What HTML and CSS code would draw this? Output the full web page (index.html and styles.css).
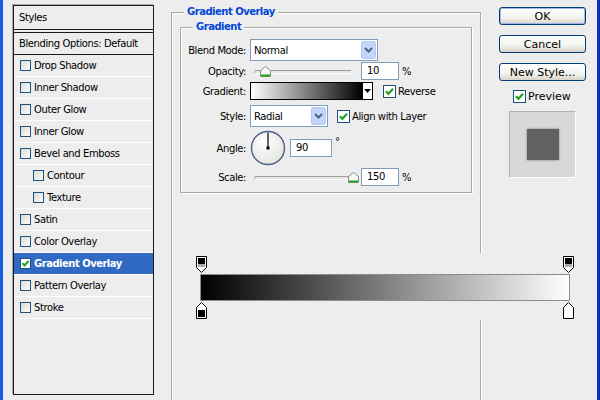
FILE: index.html
```html
<!DOCTYPE html>
<html lang="en">
<head>
    <meta charset="UTF-8">
    <title>Layer Style</title>
    <link rel="stylesheet" href="styles.css">
</head>
<body>
    <div class="window">
        <div class="styles-list">
            <div class="list-head">Styles</div>
            <div class="list-blend">Blending Options: Default</div>
            <div class="list-item"><span class="cb"></span>Drop Shadow</div>
            <div class="list-item"><span class="cb"></span>Inner Shadow</div>
            <div class="list-item"><span class="cb"></span>Outer Glow</div>
            <div class="list-item"><span class="cb"></span>Inner Glow</div>
            <div class="list-item"><span class="cb"></span>Bevel and Emboss</div>
            <div class="list-item sub"><span class="cb"></span>Contour</div>
            <div class="list-item sub"><span class="cb"></span>Texture</div>
            <div class="list-item"><span class="cb"></span>Satin</div>
            <div class="list-item"><span class="cb"></span>Color Overlay</div>
            <div class="list-item selected"><span class="cb on"><svg width="9" height="9" viewBox="0 0 9 9"><path d="M1.5 4.2 L3.5 6.5 L7.5 2" fill="none" stroke="#21a121" stroke-width="2"/></svg></span>Gradient Overlay</div>
            <div class="list-item"><span class="cb"></span>Pattern Overlay</div>
            <div class="list-item"><span class="cb"></span>Stroke</div>
        </div>

        <fieldset class="group outer">
            <legend>Gradient Overlay</legend>
            <fieldset class="group inner">
                <legend>Gradient</legend>

                <div class="field field-blend">
                    <span class="lbl">Blend Mode:</span>
                    <div class="select select-blend">
                        <span>Normal</span>
                        <span class="drop"><svg width="15" height="18" viewBox="0 0 15 18"><rect x="0.5" y="0.5" width="14" height="17" rx="2" fill="#c4d5fb" stroke="#b2c7f5"/><path d="M4 7 L7.5 10.5 L11 7" fill="none" stroke="#4d6185" stroke-width="2"/></svg></span>
                    </div>
                </div>

                <div class="field field-opacity">
                    <span class="lbl">Opacity:</span>
                    <div class="slider">
                        <div class="track"></div>
                        <svg class="thumb thumb-opacity" width="11" height="11" viewBox="0 0 11 11"><path d="M0.5 10.5 V4.5 L5.5 0.5 L10.5 4.5 V10.5 Z" fill="#f6f6f3" stroke="#8c8c86"/><rect x="1" y="8.5" width="9" height="2" fill="#21a121"/></svg>
                    </div>
                    <div class="num">10</div>
                    <span class="unit">%</span>
                </div>

                <div class="field field-gradient">
                    <span class="lbl">Gradient:</span>
                    <div class="swatch">
                        <div class="swatch-fill"></div>
                        <div class="swatch-btn"><svg width="7" height="4" viewBox="0 0 7 4"><path d="M0 0 H7 L3.5 4 Z" fill="#000"/></svg></div>
                    </div>
                    <span class="check on"><svg width="11" height="11" viewBox="0 0 11 11"><path d="M2 5.2 L4.4 7.8 L9 2.8" fill="none" stroke="#21a121" stroke-width="2.2"/></svg></span>
                    <span class="check-label">Reverse</span>
                </div>

                <div class="field field-style">
                    <span class="lbl">Style:</span>
                    <div class="select select-style">
                        <span>Radial</span>
                        <span class="drop"><svg width="15" height="18" viewBox="0 0 15 18"><rect x="0.5" y="0.5" width="14" height="17" rx="2" fill="#c4d5fb" stroke="#b2c7f5"/><path d="M4 7 L7.5 10.5 L11 7" fill="none" stroke="#4d6185" stroke-width="2"/></svg></span>
                    </div>
                    <span class="check on check-align"><svg width="11" height="11" viewBox="0 0 11 11"><path d="M2 5.2 L4.4 7.8 L9 2.8" fill="none" stroke="#21a121" stroke-width="2.2"/></svg></span>
                    <span class="check-label">Align with Layer</span>
                </div>

                <div class="field field-angle">
                    <span class="lbl">Angle:</span>
                    <svg class="dial" width="36" height="36" viewBox="0 0 36 36">
                        <defs>
                            <radialGradient id="dialfill" cx="0.4" cy="0.35" r="0.7">
                                <stop offset="0" stop-color="#ffffff"/>
                                <stop offset="1" stop-color="#e2e2de"/>
                            </radialGradient>
                        </defs>
                        <circle cx="18" cy="18" r="16.5" fill="url(#dialfill)" stroke="#4c5f86" stroke-width="1.4"/>
                        <line x1="18" y1="18" x2="18" y2="2.5" stroke="#000" stroke-width="1.2"/>
                        <rect x="16.5" y="16.5" width="3" height="3" fill="#000"/>
                    </svg>
                    <div class="num num-angle">90</div>
                    <span class="unit degree">°</span>
                </div>

                <div class="field field-scale">
                    <span class="lbl">Scale:</span>
                    <div class="slider">
                        <div class="track"></div>
                        <svg class="thumb thumb-scale" width="11" height="11" viewBox="0 0 11 11"><path d="M0.5 10.5 V4.5 L5.5 0.5 L10.5 4.5 V10.5 Z" fill="#f6f6f3" stroke="#8c8c86"/><rect x="1" y="8.5" width="9" height="2" fill="#21a121"/></svg>
                    </div>
                    <div class="num">150</div>
                    <span class="unit">%</span>
                </div>
            </fieldset>
        </fieldset>

        <div class="actions">
            <button class="btn default">OK</button>
            <button class="btn">Cancel</button>
            <button class="btn">New Style...</button>
            <div class="preview-row">
                <span class="check on"><svg width="11" height="11" viewBox="0 0 11 11"><path d="M2 5.2 L4.4 7.8 L9 2.8" fill="none" stroke="#21a121" stroke-width="2.2"/></svg></span>
                <span class="preview-label">Preview</span>
            </div>
            <div class="preview-box">
                <div class="preview-swatch"></div>
            </div>
        </div>

        <!-- gradient editor strip sits over the group box edge -->
        <div class="grad-editor">
            <div class="stops stops-top">
                <svg width="12" height="18" viewBox="0 0 12 18"><path d="M0.5 0.5 H10.5 V11.5 L5.5 16.5 L0.5 11.5 Z" fill="#fff" stroke="#000"/><rect x="2" y="2" width="7" height="6" fill="#000"/><rect x="2" y="8" width="7" height="3" fill="#a8a8a8"/></svg>
                <svg width="12" height="18" viewBox="0 0 12 18"><path d="M0.5 0.5 H10.5 V11.5 L5.5 16.5 L0.5 11.5 Z" fill="#fff" stroke="#000"/><rect x="2" y="2" width="7" height="6" fill="#000"/><rect x="2" y="8" width="7" height="3" fill="#a8a8a8"/></svg>
            </div>
            <div class="grad-bar"></div>
            <div class="stops stops-bottom">
                <svg width="12" height="18" viewBox="0 0 12 18"><path d="M5.5 0.5 L10.5 5.5 V16.5 H0.5 V5.5 Z" fill="#fff" stroke="#000"/><rect x="2" y="8" width="7" height="7" fill="#000"/></svg>
                <svg width="12" height="18" viewBox="0 0 12 18"><path d="M5.5 0.5 L10.5 5.5 V16.5 H0.5 V5.5 Z" fill="#fff" stroke="#000"/></svg>
            </div>
        </div>
    </div>
</body>
</html>
```

FILE: styles.css
```css
* {
    margin: 0;
    padding: 0;
    box-sizing: border-box;
}

body {
    font-family: "DejaVu Sans", sans-serif;
    font-size: 10px;
    letter-spacing: -0.4px;
    color: #000;
    background: #ededed;
}

.window {
    position: relative;
    width: 600px;
    height: 400px;
    overflow: hidden;
    display: flex;
    align-items: flex-start;
    background: #ededed;
    border-left: 3px solid #1b5de0;
    border-right: 3px solid #0a2fc4;
}

/* left list of effects */
.styles-list {
    flex: none;
    width: 141px;
    height: 390px;
    margin: 5px 0 0 10px;
    border: 1px solid #1a1a1a;
    box-shadow: -1px -1px 0 #a8a8a8;
}

.list-head {
    height: 24px;
    line-height: 23px;
    padding-left: 5px;
    border-bottom: 1px solid #1a1a1a;
    margin-bottom: 2px;
}

.list-blend {
    height: 23px;
    line-height: 21px;
    padding-left: 5px;
    border-top: 1px solid #1a1a1a;
    border-bottom: 1px solid #1a1a1a;
}

.list-item {
    height: 22px;
    display: flex;
    align-items: center;
    padding-left: 6px;
    border-bottom: 1px solid #fff;
}

.list-item.sub {
    padding-left: 19px;
}

.list-item.selected {
    background: #316ac5;
    color: #fff;
    font-weight: bold;
    letter-spacing: -0.5px;
}

.cb {
    flex: none;
    width: 11px;
    height: 11px;
    margin-right: 3px;
    border: 1px solid #1c5180;
    background: linear-gradient(135deg, #dcdcd6, #fafaf8);
    display: flex;
    align-items: center;
    justify-content: center;
}

.cb.on {
    background: #fff;
}

/* group boxes */
.group {
    min-width: 0;
    border: 1px solid #aca899;
    box-shadow: inset 1px 1px 0 #fff, 1px 1px 0 #fff;
}

.group legend {
    margin-left: 4px;
    padding: 0 3px;
    line-height: 14px;
    font-weight: bold;
    letter-spacing: -0.5px;
    color: #0046d5;
    background: #ededed;
}

.outer {
    flex: none;
    width: 310px;
    height: 400px;
    margin: 5px 0 0 17px;
    padding: 1px 0 0 8px;
}

.inner {
    width: 292px;
    padding: 5px 0 6px 8px;
}

.field {
    display: flex;
    align-items: center;
}

.lbl {
    flex: none;
    width: 57px;
    margin-right: 4px;
    display: flex;
    justify-content: flex-end;
    white-space: nowrap;
}

.field-blend { height: 22px; }
.field-opacity { height: 18px; margin-top: 1px; }
.field-gradient { height: 18px; margin-top: 2px; }
.field-style { height: 22px; margin-top: 5px; }
.field-angle { height: 36px; margin-top: 3px; }
.field-scale { height: 18px; margin-top: 2px; }

.select {
    flex: none;
    height: 22px;
    display: flex;
    align-items: center;
    justify-content: space-between;
    padding: 0 1px 0 3px;
    border: 1px solid #7f9db9;
    background: #fff;
}

.select-blend { width: 128px; }
.select-style { width: 78px; margin-right: 9px; }

.drop {
    display: flex;
}

.slider {
    position: relative;
    flex: none;
    width: 111px;
    height: 18px;
}

.track {
    position: absolute;
    left: 4px;
    top: 8px;
    width: 98px;
    height: 4px;
    border-radius: 2px;
    background: #e6e6e2;
    border-top: 1px solid #9d9d96;
    border-left: 1px solid #b0b0aa;
    border-bottom: 1px solid #fff;
    border-right: 1px solid #fff;
}

.thumb {
    position: absolute;
    top: 4px;
}

.thumb-opacity { left: 10px; }
.thumb-scale { left: 98px; }

.num {
    flex: none;
    width: 38px;
    height: 18px;
    line-height: 16px;
    padding-left: 5px;
    border: 1px solid #7f9db9;
    background: #fff;
}

.num-angle {
    width: 42px;
    margin-left: 4px;
}

.unit {
    margin-left: 3px;
}

.degree {
    align-self: flex-start;
    margin-top: 6px;
}

.swatch {
    flex: none;
    width: 123px;
    height: 18px;
    margin-right: 10px;
    display: flex;
    border: 1px solid #000;
}

.swatch-fill {
    flex: 1;
    background: linear-gradient(to right, #fff, #000);
}

.swatch-btn {
    width: 10px;
    border-left: 1px solid #000;
    background: #fff;
    display: flex;
    align-items: center;
    justify-content: center;
}

.check {
    flex: none;
    width: 13px;
    height: 13px;
    border: 1px solid #1c5180;
    background: linear-gradient(135deg, #dcdcd6, #fff);
    display: flex;
    align-items: center;
    justify-content: center;
}

.check.on {
    background: #fff;
}

.check-label {
    margin-left: 2px;
}

/* right column */
.actions {
    flex: none;
    width: 87px;
    margin: 7px 0 0 18px;
    display: flex;
    flex-direction: column;
}

.btn {
    height: 18px;
    margin-bottom: 10px;
    border: 1px solid #003c74;
    border-radius: 3px;
    background: linear-gradient(#ffffff, #f3f3ee 60%, #d8d3c8);
    font-family: "DejaVu Sans", sans-serif;
    font-size: 11px;
    letter-spacing: 0;
    line-height: 15px;
    color: #000;
}

.btn.default {
    box-shadow: inset 0 0 0 1px #9cb8ea;
}

.btn:last-of-type {
    margin-bottom: 8px;
}

.preview-row {
    height: 14px;
    display: flex;
    align-items: center;
    padding-left: 14px;
}

.preview-label {
    margin-left: 2px;
    font-size: 11px;
    letter-spacing: 0;
}

.preview-box {
    width: 67px;
    height: 67px;
    margin: 8px 0 0 10px;
    display: flex;
    align-items: center;
    justify-content: center;
    background: #d8d8d8;
    border-top: 1px solid #b3b0a7;
    border-left: 1px solid #b3b0a7;
    border-right: 1px solid #fff;
    border-bottom: 1px solid #fff;
}

.preview-swatch {
    width: 32px;
    height: 31px;
    background: #626262;
    box-shadow: 0 0 2px #777;
}

/* gradient editor */
.grad-editor {
    position: absolute;
    left: 190px;
    top: 253px;
    width: 385px;
    height: 67px;
    padding: 3px 0 0 3px;
    background: #ededed;
}

.stops {
    width: 379px;
    display: flex;
    justify-content: space-between;
}

.stops svg {
    display: block;
}

.grad-bar {
    width: 370px;
    height: 27px;
    margin: 0 0 1px 4px;
    border: 1px solid #8c8c8c;
    background: linear-gradient(to right, #000, #fff);
}
```
